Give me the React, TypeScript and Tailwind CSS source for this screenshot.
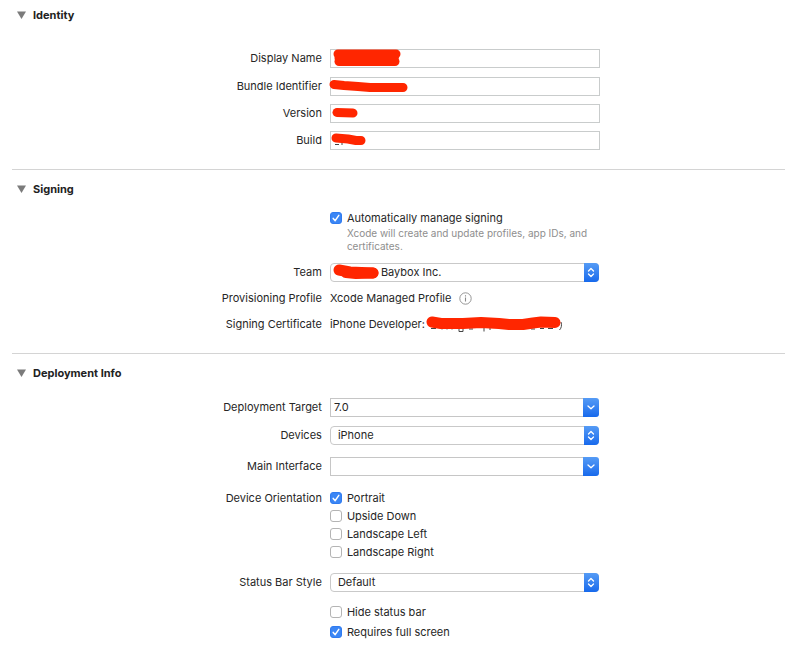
import React from 'react';

type RowProps = {
  label?: string;
  htmlFor?: string;
  className?: string;
  children: React.ReactNode;
};

const Row: React.FC<RowProps> = ({ label, htmlFor, className = '', children }) => (
  <div className={`grid grid-cols-[29fr_41fr] gap-x-2 ${className}`}>
    <div className="h-[19px] text-right leading-[19px] whitespace-nowrap">
      {label && htmlFor && <label htmlFor={htmlFor}>{label}</label>}
      {label && !htmlFor && <span>{label}</span>}
    </div>
    <div className="min-w-0">{children}</div>
  </div>
);

type SectionProps = {
  title: string;
  className?: string;
  children: React.ReactNode;
};

const Section: React.FC<SectionProps> = ({ title, className = '', children }) => (
  <section className={className}>
    <h2>
      <button type="button" aria-expanded="true" className="ml-[17px] flex h-4 items-center gap-[7px] font-bold text-[#222]">
        <svg viewBox="0 0 9 8" className="h-2 w-[9px]" aria-hidden="true">
          <path d="M0 0.5h9L4.5 8z" fill="#7b7b7b" />
        </svg>
        {title}
      </button>
    </h2>
    {children}
  </section>
);

const Divider: React.FC = () => <hr className="ml-3 border-t border-[#d4d4d4]" />;

type ScribbleProps = {
  paths: string[];
  marks?: string;
  width?: number;
};

// Marker strokes that hide private values, in pixels from the field's corner
const Scribble: React.FC<ScribbleProps> = ({ paths, marks, width = 9 }) => (
  <svg className="pointer-events-none absolute top-0 left-0 h-[19px] w-60 overflow-visible" viewBox="0 0 240 19" aria-hidden="true">
    {marks && <path d={marks} fill="none" stroke="#444" strokeWidth="1" />}
    {paths.map((d) => (
      <path key={d} d={d} fill="none" stroke="#ff2600" strokeWidth={width} strokeLinecap="round" strokeLinejoin="round" />
    ))}
  </svg>
);

type FieldProps = { id: string; children?: React.ReactNode };

const TextField: React.FC<FieldProps> = ({ id, children }) => (
  <div className="relative max-w-[270px]">
    <input id={id} type="text" className="block h-[19px] w-full border border-[#c9cccc] bg-white px-1 outline-none" />
    {children}
  </div>
);

type ComboProps = { id: string; name: string; value?: string };

const ComboBox: React.FC<ComboProps> = ({ id, name, value = '' }) => (
  <div className="flex h-[19px] max-w-[269px]">
    <input id={id} type="text" defaultValue={value} className="min-w-0 flex-1 border border-r-0 border-[#c6c6c6] bg-white px-[3px] outline-none" />
    <button type="button" aria-label={`Show ${name} options`} className="flex w-4 items-center justify-center rounded-r-[3px] bg-linear-to-b from-[#559bf5] to-[#1669ec]">
      <svg viewBox="0 0 8 5" className="h-[5px] w-2" fill="none" stroke="#fff" strokeWidth="1.3" strokeLinecap="round" strokeLinejoin="round">
        <path d="M1 1l3 2.8L7 1" />
      </svg>
    </button>
  </div>
);

type PopUpProps = { id: string; value: string; className?: string; children?: React.ReactNode };

const PopUp: React.FC<PopUpProps> = ({ id, value, className = 'pl-[7px]', children }) => (
  <div className="relative h-[19px] max-w-[269px]">
    <select id={id} className={`block h-[19px] w-full appearance-none rounded-[4px] border border-[#c9c9c9] bg-white pr-5 outline-none ${className}`}>
      <option>{value}</option>
    </select>
    <span className="pointer-events-none absolute inset-y-0 right-0 flex w-[15px] items-center justify-center rounded-r-[4px] bg-linear-to-b from-[#559bf5] to-[#1669ec]">
      <svg viewBox="0 0 8 11" className="h-[11px] w-2" fill="none" stroke="#fff" strokeWidth="1.3" strokeLinecap="round" strokeLinejoin="round">
        <path d="M1.5 4L4 1.5 6.5 4M1.5 7L4 9.5 6.5 7" />
      </svg>
    </span>
    {children}
  </div>
);

type CheckProps = { label: string; checked?: boolean };

const Check: React.FC<CheckProps> = ({ label, checked = false }) => (
  <label className="flex h-[18px] items-center gap-[5px]">
    <span className="relative size-3">
      <input
        type="checkbox"
        defaultChecked={checked}
        className="peer block size-3 appearance-none rounded-[3px] border border-[#b4b4b4] bg-white checked:border-[#2f7bf0] checked:bg-[#3b86f5]"
      />
      <svg viewBox="0 0 12 12" className="pointer-events-none absolute inset-0 hidden size-3 peer-checked:block" fill="none" stroke="#fff" strokeWidth="1.5" strokeLinecap="round" strokeLinejoin="round">
        <path d="M3.2 6.4l2 2.3 3.6-5.4" />
      </svg>
    </span>
    {label}
  </label>
);

const App: React.FC = () => {
  return (
    <main className="bg-white pb-1.5 font-['Inter','Liberation_Sans',sans-serif] text-[11px] text-[#262626]">
      <Section title="Identity" className="pt-[7px] pb-[19px]">
        <div className="mt-[26px] flex flex-col gap-2">
          <Row label="Display Name" htmlFor="display-name">
            <TextField id="display-name">
              <Scribble paths={['M8 5L66 5', 'M9 9h55', 'M9 12.5L65 12.5']} />
            </TextField>
          </Row>
          <Row label="Bundle Identifier" htmlFor="bundle-id" className="mt-px">
            <TextField id="bundle-id">
              <Scribble paths={['M4 7.5L14 8.5L28 9.5L40 10.5L73 10.5']} />
            </TextField>
          </Row>
          <Row label="Version" htmlFor="version">
            <TextField id="version">
              <Scribble paths={['M7 8.5L23 9']} />
            </TextField>
          </Row>
          <Row label="Build" htmlFor="build">
            <TextField id="build">
              <Scribble paths={['M6 7L18 8L26 9.5L31 9.5']} marks="M5 13.5h4M12 12v2" />
            </TextField>
          </Row>
        </div>
      </Section>

      <Divider />

      <Section title="Signing" className="pt-[11px] pb-[19px]">
        <div className="mt-3 flex flex-col gap-[7px]">
          <Row>
            <Check label="Automatically manage signing" checked />
            <p className="mb-[3px] ml-[17px] max-w-[255px] text-[10px] leading-[13px] text-[#8e8e8e]">
              Xcode will create and update profiles, app IDs, and certificates.
            </p>
          </Row>
          <Row label="Team" htmlFor="team">
            <PopUp id="team" value="Baybox Inc." className="pl-[50px]">
              <Scribble paths={['M9 7L20 9L43 10', 'M16 9.5L26 10.5L43 10']} width={11} />
            </PopUp>
          </Row>
          <Row label="Provisioning Profile">
            <div className="flex h-[19px] items-center gap-2">
              Xcode Managed Profile
              <button type="button" aria-label="About this profile">
                <svg viewBox="0 0 13 13" className="block size-[13px]" fill="none" stroke="#8a8a8a">
                  <circle cx="6.5" cy="6.5" r="5.7" strokeWidth="0.9" />
                  <path d="M6.5 5.6v3.9M6.5 3.3v1.2" strokeWidth="1.1" />
                </svg>
              </button>
            </div>
          </Row>
          <Row label="Signing Certificate">
            <div className="flex h-[19px] items-center gap-0.5">
              iPhone Developer:
              <span className="relative h-[19px] w-[134px]">
                <Scribble
                  paths={['M5 7L14 8.5L36 8.5L54 7.5L72 8.5L82 9.5L96 9.5L106 8L114 7L128 7.5']}
                  width={11}
                  marks="M4 13.5h5M15 13v1.5M20 13v1.5M25 13v1.5M32 13v3.5h4v-3M42 14h4M57 13v3.5M63 13v2M104 14h4M113 13.5h4M121 13.5h5M134 7c1 3 0.5 6-1.5 8"
                />
              </span>
            </div>
          </Row>
        </div>
      </Section>

      <Divider />

      <Section title="Deployment Info" className="pt-[11px]">
        <Row label="Deployment Target" htmlFor="target" className="mt-[17px]">
          <ComboBox id="target" name="Deployment Target" value="7.0" />
        </Row>
        <Row label="Devices" htmlFor="devices" className="mt-[9px]">
          <PopUp id="devices" value="iPhone" />
        </Row>
        <Row label="Main Interface" htmlFor="main-interface" className="mt-3">
          <ComboBox id="main-interface" name="Main Interface" />
        </Row>
        <Row label="Device Orientation" className="mt-[13px]">
          <Check label="Portrait" checked />
          <Check label="Upside Down" />
          <Check label="Landscape Left" />
          <Check label="Landscape Right" />
        </Row>
        <Row label="Status Bar Style" htmlFor="status-bar" className="mt-3">
          <PopUp id="status-bar" value="Default" />
        </Row>
        <Row className="mt-[11px]">
          <div className="flex flex-col gap-0.5">
            <Check label="Hide status bar" />
            <Check label="Requires full screen" checked />
          </div>
        </Row>
      </Section>
    </main>
  );
};

export default App;
